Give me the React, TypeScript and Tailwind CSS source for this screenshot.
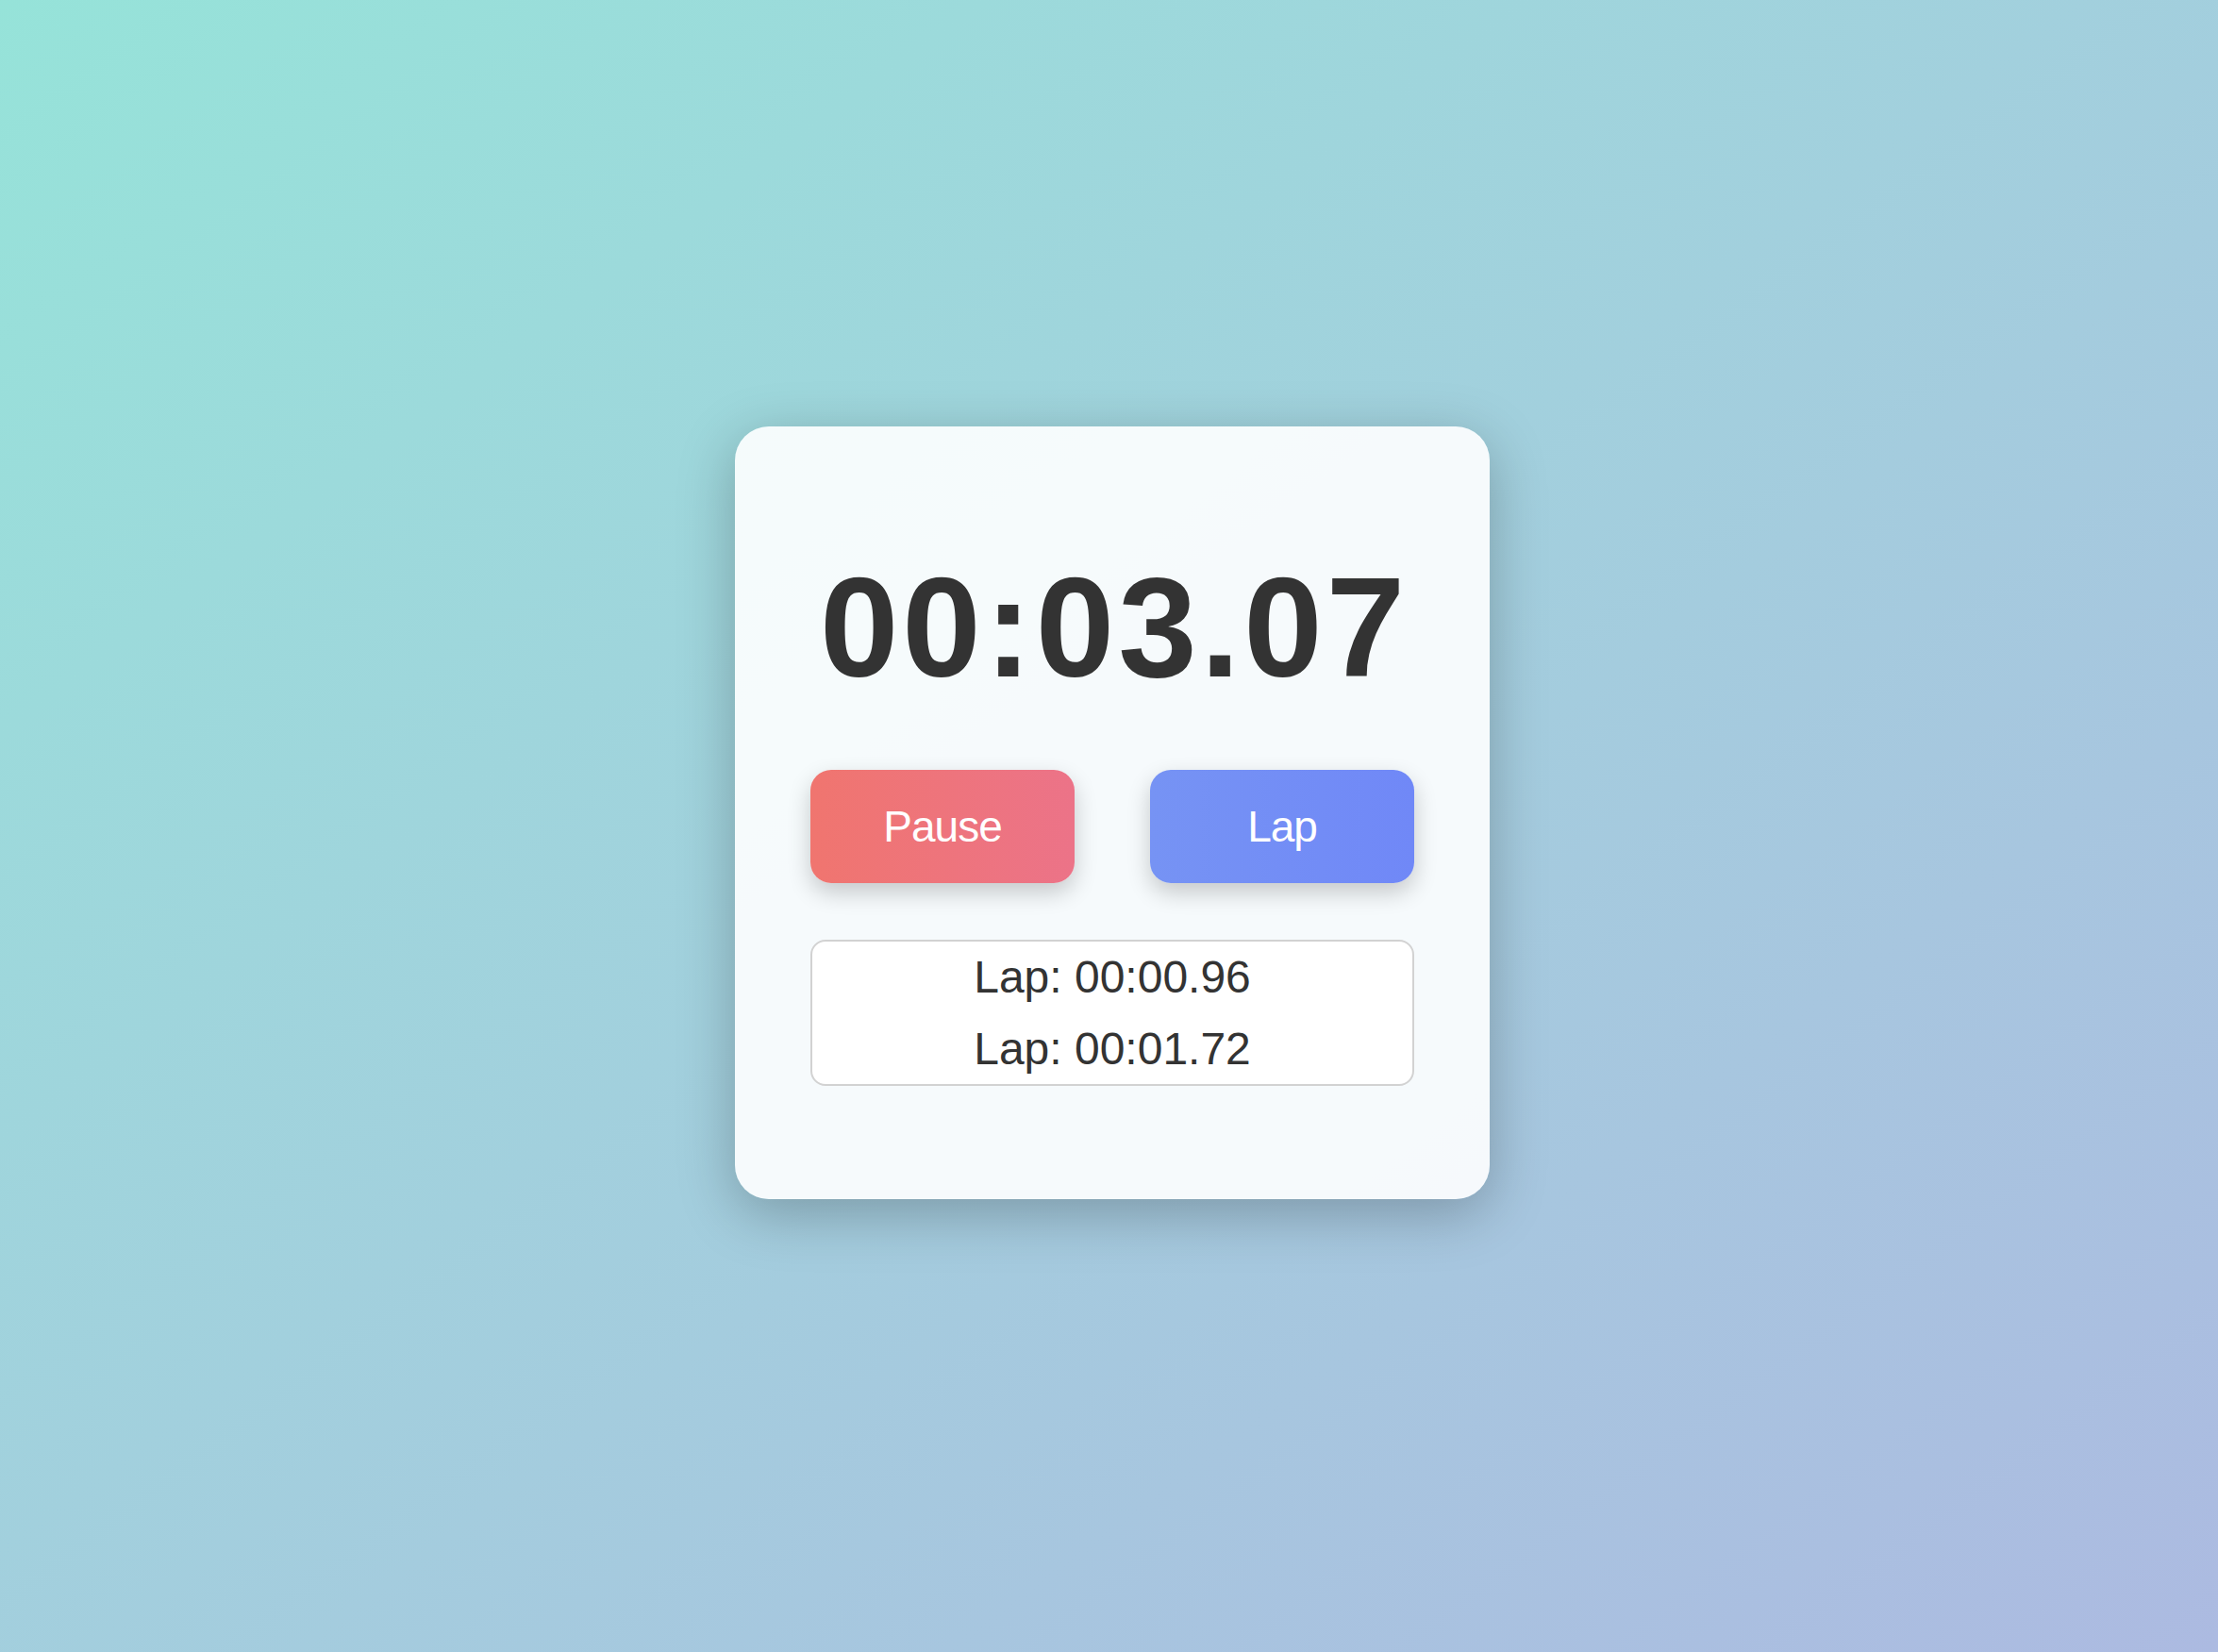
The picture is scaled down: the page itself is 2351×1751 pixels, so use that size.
import React from "react";

const laps = ["00:00.96", "00:01.72"];

const App: React.FC = () => {
  return (
    <div className="flex min-h-screen w-full items-center justify-center bg-linear-to-br from-[#96e3d9] to-[#acbae1] pb-[28px] pl-[7px] font-['Liberation_Sans',Arial,sans-serif]">
      <div className="w-[800px] rounded-[36px] bg-white/90 p-[80px] shadow-[0_15px_60px_rgba(0,0,0,0.25)]">
        <div className="mt-[58px] pl-[4px] text-center text-[150px] leading-none font-bold tracking-[4px] text-[#333333]">
          00:03.07
        </div>

        <div className="mt-[76px] flex justify-between">
          <button className="flex h-[120px] w-[280px] items-center justify-center rounded-[22px] bg-linear-to-r from-[#f0756f] to-[#ec7388] text-[46px] tracking-[-1px] text-white shadow-[0_10px_25px_rgba(0,0,0,0.2)]">
            Pause
          </button>
          <button className="flex h-[120px] w-[280px] items-center justify-center rounded-[22px] bg-linear-to-r from-[#7693f4] to-[#7088f7] text-[46px] tracking-[-1px] text-white shadow-[0_10px_25px_rgba(0,0,0,0.2)]">
            Lap
          </button>
        </div>

        <ul className="mt-[60px] mb-[40px] rounded-[16px] border-2 border-[#d2d2d2] bg-white">
          {laps.map((t) => (
            <li
              key={t}
              className="h-[75.5px] text-center text-[48px] leading-[75px] text-[#333333]"
            >
              Lap: {t}
            </li>
          ))}
        </ul>
      </div>
    </div>
  );
};

export default App;
